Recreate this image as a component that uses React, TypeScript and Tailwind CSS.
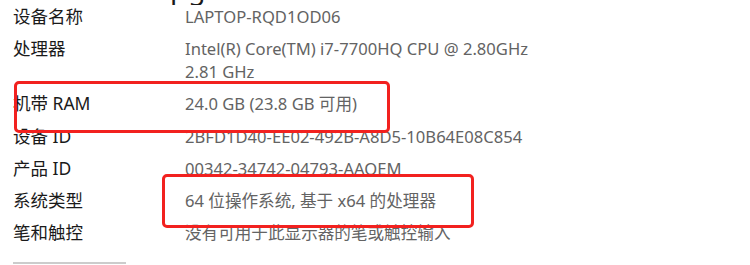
import React from "react";

const rows: { label: string; value: React.ReactNode }[] = [
  { label: "设备名称", value: "LAPTOP-RQD1OD06" },
  {
    label: "处理器",
    value: (
      <>
        Intel(R) Core(TM) i7-7700HQ CPU @ 2.80GHz
        <br />
        2.81 GHz
      </>
    ),
  },
  { label: "机带 RAM", value: "24.0 GB (23.8 GB 可用)" },
  { label: "设备 ID", value: "2BFD1D40-EE02-492B-A8D5-10B64E08C854" },
  { label: "产品 ID", value: "00342-34742-04793-AAOEM" },
  { label: "系统类型", value: "64 位操作系统, 基于 x64 的处理器" },
  { label: "笔和触控", value: "没有可用于此显示器的笔或触控输入" },
];

export default function App() {
  return (
    <div
      className="relative w-[750px] h-[265px] overflow-hidden bg-white"
      style={{ fontFamily: '"Noto Sans", "Noto Sans CJK SC", sans-serif' }}
    >
      <div className="h-[5px] overflow-hidden">
        <div className="mt-[-26px] text-[28px] leading-none text-[#1a1a1a] whitespace-pre">
          <span className="ml-[170px]">p</span>
          <span className="ml-[1px]">g</span>
        </div>
      </div>
      <div className="pl-[13px] grid grid-cols-[172px_1fr] gap-y-[9.2px] leading-[23px]">
        {rows.map((r) => (
          <React.Fragment key={r.label}>
            <div className="text-[17.5px] text-[#1a1a1a]">{r.label}</div>
            <div className="text-[16.6px] text-[#636363]">{r.value}</div>
          </React.Fragment>
        ))}
      </div>
      <div className="ml-[13px] mt-[18px] w-[113px] h-[2px] bg-[#cccccc]" />
      <div className="absolute left-[14px] top-[81px] w-[376px] h-[52px] rounded-[5px] border-[3px] border-[#f2211f]" />
      <div className="absolute left-[162px] top-[174px] w-[312px] h-[54px] rounded-[5px] border-[3px] border-[#f2211f]" />
    </div>
  );
}
